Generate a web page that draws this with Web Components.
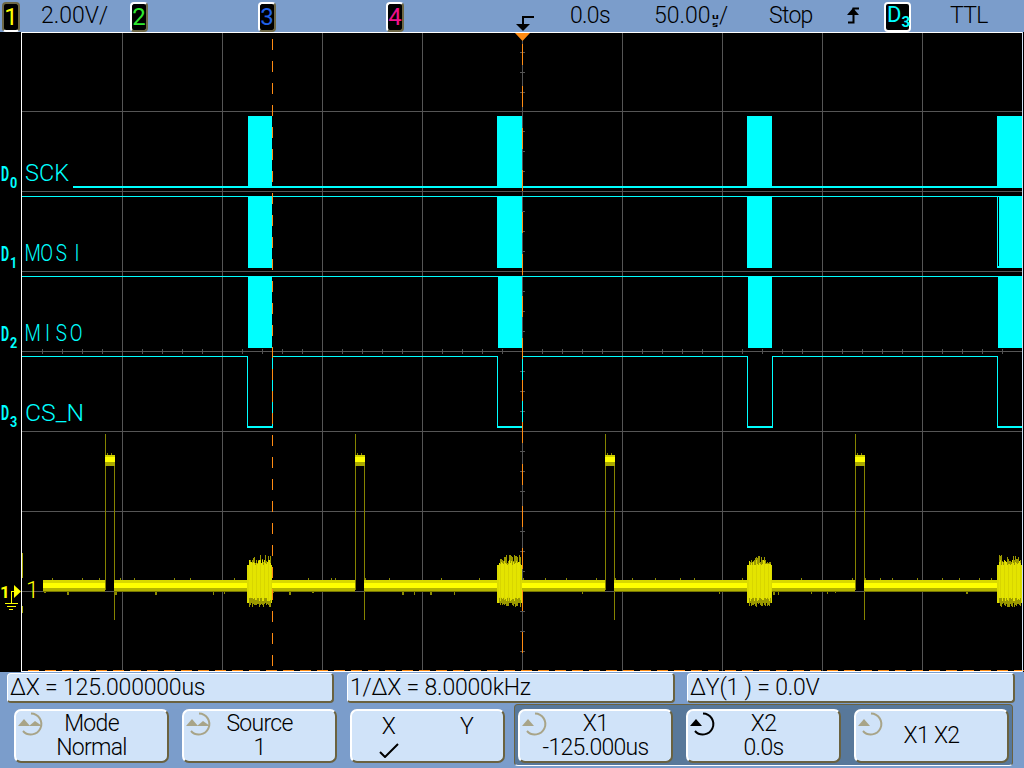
<!DOCTYPE html>
<html>
<head>
<meta charset="utf-8">
<title>Scope</title>
<style>
  html, body { margin: 0; background: #7b9dcb; }
  body { font-family: Roboto, "Liberation Sans", Arial, sans-serif; font-weight: 300; }
</style>
</head>
<body>
<scope-app></scope-app>
<script>
// small square badge in the top bar (channel number or trigger source)
class ChannelBadge extends HTMLElement {
  constructor() {
    super();
    this.attachShadow({ mode: 'open' });
    this.shadowRoot.innerHTML = `
    <style>
      :host {
        display: flex;
        align-items: center;
        justify-content: center;
        box-sizing: border-box;
        width: 18px;
        height: 30px;
        margin-top: 1px;
        background: #000;
        color: var(--badge-color, #ff0);
        border: 2px solid;
        border-color: #fff #6e6846 #6e6846 #fff;
        border-radius: 4px;
        font-size: 24px;
        font-weight: 400;
        letter-spacing: 0;
        line-height: 1;
      }
      :host(.selected) { border-color: #6e6846 #6e6846 #fff #6e6846; }
      :host(.wide) { width: 27px; border-color: #fff; justify-content: flex-start; padding: 0 0 4px 1px; font-size: 22px; }
      ::slotted(sub) { font-size: 15px; font-weight: bold; line-height: 1; align-self: flex-end; margin: 0 0 -4px 0; }
    </style>
    <slot></slot>`;
  }
}

class ScopeTopbar extends HTMLElement {
  constructor() {
    super();
    this.attachShadow({ mode: 'open' });
    this.shadowRoot.innerHTML = `
    <style>
      :host {
        display: flex;
        align-items: center;
        height: 32px;
        padding-left: 2px;
        background: #7b9dcb;
        color: #000;
        font-size: 23px;
        letter-spacing: 0;
        white-space: nowrap;
      }
      channel-badge { flex: none; }
      .t { flex: none; line-height: 32px; }
      .tight { letter-spacing: -0.7px; }
      .units { display: inline-flex; flex-direction: column; vertical-align: 4px; font-size: 8px; line-height: 8px; font-weight: bold; margin: 0 2px; transform: scaleX(1.5); }
      svg { flex: none; display: block; }
    </style>
    <channel-badge class="selected" style="--badge-color:#ffff00">1</channel-badge>
    <span class="t" style="margin-left:21px;width:89px">2.00V/</span>
    <channel-badge style="--badge-color:#2fe82f">2</channel-badge>
    <channel-badge style="--badge-color:#2060e8;margin-left:110px">3</channel-badge>
    <channel-badge style="--badge-color:#f0108c;margin-left:110px">4</channel-badge>
    <svg style="margin-left:112px" width="18" height="32" viewBox="0 0 18 32">
      <path d="M6 17h12M7 17v8" stroke="#000" stroke-width="2" fill="none"/>
      <path d="M0 24h14l-7 7z" fill="#000"/>
    </svg>
    <span class="t tight" style="margin-left:36px;width:84px">0.0s</span>
    <span class="t" style="width:115px">50.00<span class="units"><span>u</span><span>s</span></span>/</span>
    <span class="t tight" style="width:78px">Stop</span>
    <svg width="12" height="32" viewBox="0 0 12 32">
      <path d="M1 22.5h5.5V8.5H12" stroke="#000" stroke-width="2" fill="none"/>
      <path d="M0 15l6-7 6 7z" fill="#000"/>
    </svg>
    <channel-badge class="wide" style="--badge-color:#00ffff;margin-left:25px">D<sub>3</sub></channel-badge>
    <span class="t tight" style="margin-left:39px">TTL</span>`;
  }
}

// the trace area, drawn with absolute coordinates of the full window
class ScopeScreen extends HTMLElement {
  constructor() {
    super();
    this.attachShadow({ mode: 'open' });
    this._seed = 7;
    this.shadowRoot.innerHTML = `
    <style>
      :host { display: block; width: 1024px; height: 640px; background: #000; }
      svg { display: block; }
      text { font-family: Roboto, "Liberation Sans", Arial, sans-serif; }
    </style>
    <svg width="1024" height="640" viewBox="0 32 1024 640" shape-rendering="crispEdges">${this._draw()}</svg>`;
  }

  _rand() {
    this._seed = (this._seed * 16807) % 2147483647;
    return this._seed / 2147483647;
  }

  _rect(x, y, w, h, c) {
    return `<rect x="${x}" y="${y}" width="${w}" height="${h}" fill="${c}"/>`;
  }

  _grid() {
    let s = '';
    const c = '#555';
    for (let x = 122; x < 1000; x += 100) s += this._rect(x, 33, 1, 638, c);
    for (let y = 111; y < 670; y += 80) s += this._rect(22, y, 1000, 1, c);
    // graduations on the centre axes
    for (let x = 42; x < 1022; x += 20) s += this._rect(x, 349, 1, 5, c);
    for (let y = 52; y < 670; y += 20) s += this._rect(520, y - (y > 111 ? 1 : 0), 5, 1, c);
    return s;
  }

  _digital() {
    const cy = '#00ffff';
    let s = '';
    const starts = [248, 497, 747, 997];
    // D0
    s += this._rect(73, 186, 949, 2, cy);
    starts.forEach(x => { s += this._rect(x, 116, x === 248 ? 24 : 25, 72, cy); });
    // D1
    s += this._rect(22, 196, 1000, 1, cy);
    [248, 497, 747].forEach(x => { s += this._rect(x, 196, x === 248 ? 24 : 25, 72, cy); });
    s += this._rect(997, 196, 1, 70, cy) + this._rect(999, 196, 1, 70, cy) + this._rect(1000, 196, 22, 72, cy);
    s += this._rect(997, 266, 3, 2, cy);
    // D2
    s += this._rect(22, 276, 1000, 1, cy);
    [248, 498, 748, 998].forEach(x => { s += this._rect(x, 276, 24, 72, cy); });
    // D3
    let px = 22;
    [247, 497, 747, 997].forEach(x => {
      s += this._rect(px, 356, x - px, 1, cy);
      s += this._rect(x, 356, 1, 72, cy);
      s += this._rect(x, 426, 26, 2, cy);
      s += this._rect(x + 25, 356, 1, 72, cy);
      px = x + 25;
    });
    return s;
  }

  _band(x0, x1) {
    let s = this._rect(x0, 580, x1 - x0, 3, '#d8d800')
      + this._rect(x0, 583, x1 - x0, 5, '#ffff00')
      + this._rect(x0, 588, x1 - x0, 3, '#b4b400')
      + this._rect(x0, 591, x1 - x0, 1, '#777700');
    for (let x = x0 + 1; x < x1; x += 4 + Math.floor(this._rand() * 22)) {
      if (this._rand() > 0.4) s += this._rect(x, 578, 1, 2, '#8c8c00');
      else s += this._rect(x, 592, 1 + Math.floor(this._rand() * 2), 1 + Math.floor(this._rand() * 3), '#8c8c00');
    }
    return s;
  }

  _burst(x0, x1) {
    let s = this._rect(x0, 565, x1 - x0, 38, '#dcdc00');
    for (let x = x0 + 2; x < x1 - 1; x++) {
      const top = 555 + Math.floor(this._rand() * 9);
      const bot = 603 + Math.floor(this._rand() * 5);
      s += this._rect(x, top, 1, 566 - top, '#9a9800');
      s += this._rect(x, 598, 1, bot - 598, '#9a9800');
      const t2 = 560 + Math.floor(this._rand() * 6);
      const b2 = 597 + Math.floor(this._rand() * 5);
      s += this._rect(x, t2, 1, b2 - t2, x % 4 ? '#e4e400' : '#d8d600');
    }
    return s;
  }

  _analog() {
    const ol = '#858300';
    let s = '';
    [105, 355, 605, 855].forEach((x, i) => {
      s += this._rect(x, 434, 1, 156, ol);
      s += this._rect(x + 9, 466, 1, 154, ol);
      s += this._rect(x, 455, 10, 2, '#d0d000') + this._rect(x, 457, 10, 5, '#ffff00') + this._rect(x, 462, 10, 4, '#a8a800');
      s += this._rect(x + 2, 453, 1, 2, ol) + this._rect(x + 6, 453, 1, 2, ol);
      s += this._band(i === 0 ? 43 : x - 83, x);
      s += this._band(x + 9, x + 142);
      s += this._burst(x + 142, x + 167);
    });
    // left edge marks
    s += this._rect(22, 553, 1, 25, '#a8a800') + this._rect(22, 606, 1, 7, '#a8a800');
    return s;
  }

  _cursors() {
    const or = '#ff8c14';
    let s = '';
    for (let y = 39; y < 670; y += 22) s += this._rect(272, y, 1, 11, or);
    for (let y = 44; y < 670; y += 42) s += this._rect(522, y, 1, 21, or);
    for (let x = 28; x < 1022; x += 17) s += this._rect(x, 670, 11, 1, or);
    s += `<path d="M515 33h15l-7.5 8z" fill="${or}" shape-rendering="auto"/>`;
    return s;
  }

  _labels() {
    const cy = '#00ffff';
    // x lists put the wide-set bitmap letters where the scope draws them
    const rows = [
      ['0', 'SCK', 181, 181, '25', 1, 44],
      ['1', 'MOS I', 261, 261, '30 49 68 85 91', 0.82],
      ['2', 'M I SO', 341, 341, '30 50 55 60 68 85', 0.82],
      ['3', 'CS_N', 420, 421, '25', 1, 59],
    ];
    let s = '<g shape-rendering="auto">';
    rows.forEach(([n, name, dy, ty, xs, sx, w]) => {
      const fit = w ? `textLength="${w}" lengthAdjust="spacingAndGlyphs"` : '';
      s += `<text transform="translate(1 ${dy}) scale(.62 1)" fill="${cy}" font-family="Liberation Sans" font-size="20" font-weight="bold">D</text>`;
      s += `<text transform="translate(10 ${dy + 7}) scale(.9 1)" fill="${cy}" font-family="Liberation Sans" font-size="14" font-weight="bold">${n}</text>`;
      s += `<text transform="scale(${sx} 1)" x="${xs}" y="${ty}" fill="${cy}" font-size="23" font-weight="300" xml:space="preserve" ${fit}>${name}</text>`;
    });
    s += `<text x="26" y="598" fill="#ffff00" font-size="23" font-weight="300">1</text>`;
    s += `<text x="0" y="598" fill="#ffff00" font-family="Liberation Sans" font-size="17" font-weight="bold">1</text>`;
    s += '</g>';
    // ground marker for channel 1
    s += this._rect(11, 591, 3, 1, '#ffff00') + this._rect(11, 591, 1, 12, '#ffff00');
    s += this._rect(5, 603, 13, 1, '#ffff00') + this._rect(7, 606, 9, 1, '#ffff00') + this._rect(9, 609, 4, 1, '#ffff00');
    s += '<path d="M14 585l7 6.5-7 6.5z" fill="#ffff00" shape-rendering="auto"/>';
    return s;
  }

  _draw() {
    let s = this._grid();
    s += this._digital();
    s += this._analog();
    s += this._cursors();
    s += this._labels();
    // screen frame
    s += this._rect(21, 32, 1002, 1, '#fff') + this._rect(21, 32, 1, 640, '#fff');
    s += this._rect(21, 671, 1002, 1, '#fff') + this._rect(1022, 32, 1, 640, '#cfe0f5');
    return s;
  }
}

class ReadoutBox extends HTMLElement {
  constructor() {
    super();
    this.attachShadow({ mode: 'open' });
    this.shadowRoot.innerHTML = `
    <style>
      :host {
        display: block;
        box-sizing: border-box;
        height: 30px;
        padding-left: 2px;
        background: #d0e3f9;
        color: #000;
        border: 1px solid;
        border-color: #fff #6a6240 #6a6240 #fff;
        border-width: 1px 2px 2px 1px;
        border-radius: 4px;
        font-size: 23px;
        line-height: 27px;
        letter-spacing: -0.2px;
        white-space: nowrap;
      }
    </style>
    <slot></slot>`;
  }
}

class SoftKey extends HTMLElement {
  constructor() {
    super();
    this.attachShadow({ mode: 'open' });
    const icon = this.getAttribute('icon');
    this.shadowRoot.innerHTML = `
    <style>
      :host {
        display: block;
        position: relative;
        box-sizing: border-box;
        flex: none;
        width: 155px;
        height: 54px;
        background: #d0e3f9;
        color: #000;
        border: 2px solid;
        border-color: #fff #6a6240 #6a6240 #fff;
        border-radius: 7px;
        font-size: 23px;
        letter-spacing: -0.7px;
        line-height: 24px;
        text-align: center;
      }
      .body { height: 100%; display: flex; flex-direction: column; justify-content: center; }
      svg.knob { position: absolute; left: 0; top: 0; }
    </style>
    ${this._knob(icon)}
    <div class="body"><slot></slot></div>`;
  }

  _knob(kind) {
    if (!kind) return '';
    const c = kind === 'active' ? '#000' : '#a8a488';
    const arc = `<path d="M15 2.5a10.5 10.5 0 1 1 -8 17.5" fill="none" stroke="${c}" stroke-width="2"/>`;
    const left = `<path d="M2 15l6-7 6 7z" fill="${c}"/>`;
    const right = `<path d="M13 15l6-5 7 5z" fill="${c}"/>`;
    return `<svg class="knob" width="32" height="28" viewBox="0 0 32 28">${arc}${left}${kind === 'both' ? right : ''}</svg>`;
  }
}

class ScopeApp extends HTMLElement {
  constructor() {
    super();
    this.attachShadow({ mode: 'open' });
    this.shadowRoot.innerHTML = `
    <style>
      :host { display: block; width: 1024px; height: 768px; background: #7b9dcb; overflow: hidden; }
      .readouts { display: flex; margin: 1px 0 0 7px; }
      .readouts readout-box:nth-child(1) { width: 327px; margin-right: 13px; }
      .readouts readout-box:nth-child(2) { width: 328px; margin-right: 12px; }
      .readouts readout-box:nth-child(3) { width: 328px; }
      .keys { display: flex; align-items: flex-start; gap: 13px; margin: 6px 0 0 14px; }
      .group {
        display: flex;
        gap: 13px;
        margin: -5px 0 0 -4px;
        padding: 4px 3px 2px 3px;
        background: #58789a;
        border: 1px solid #6a6240;
        border-bottom-color: #fff;
        border-radius: 4px;
      }
      .xy { display: grid; grid-template-columns: 78px 78px; margin-left: -2.5px; line-height: 24px; }
      .xy svg { display: block; margin: 4px auto 0; }
    </style>
    <scope-topbar></scope-topbar>
    <scope-screen></scope-screen>
    <div class="readouts">
      <readout-box>ΔX = 125.000000us</readout-box>
      <readout-box>1/ΔX = 8.0000kHz</readout-box>
      <readout-box>ΔY(1 ) = 0.0V</readout-box>
    </div>
    <div class="keys">
      <soft-key icon="both"><div>Mode</div><div>Normal</div></soft-key>
      <soft-key icon="both"><div>Source</div><div>1</div></soft-key>
      <soft-key>
        <div class="xy">
          <span>X</span><span>Y</span>
          <svg width="20" height="15" viewBox="0 0 20 15"><path d="M1 9l5 5L19 1" fill="none" stroke="#000" stroke-width="2"/></svg>
        </div>
      </soft-key>
      <div class="group">
        <soft-key icon="one"><div>X1</div><div>-125.000us</div></soft-key>
        <soft-key icon="active"><div>X2</div><div>0.0s</div></soft-key>
        <soft-key icon="one"><div>X1 X2</div></soft-key>
      </div>
    </div>`;
  }
}

customElements.define('channel-badge', ChannelBadge);
customElements.define('scope-topbar', ScopeTopbar);
customElements.define('scope-screen', ScopeScreen);
customElements.define('readout-box', ReadoutBox);
customElements.define('soft-key', SoftKey);
customElements.define('scope-app', ScopeApp);
</script>
</body>
</html>
